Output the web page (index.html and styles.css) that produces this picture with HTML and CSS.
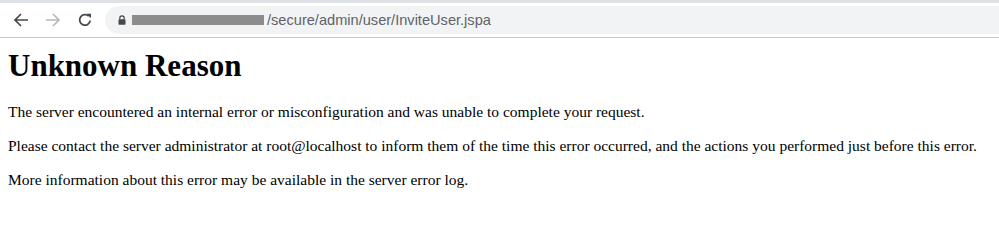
FILE: index.html
```html
<!DOCTYPE html>
<html>
<head>
<meta charset="utf-8">
<link rel="stylesheet" href="styles.css">
</head>
<body>
<div class="chrome">
  <div class="tabstrip"></div>
  <div class="toolbar">
    <div class="navs">
      <svg class="nav" width="16" height="16" viewBox="0 0 16 16"><path d="M15 8H2.5M8 2L2 8l6 6" fill="none" stroke="#45484c" stroke-width="1.7"/></svg>
      <svg class="nav" width="16" height="16" viewBox="0 0 16 16"><path d="M1 8h12.5M8 2l6 6-6 6" fill="none" stroke="#b4b7bb" stroke-width="1.6"/></svg>
      <svg class="nav" width="16" height="16" viewBox="0 0 16 16"><path d="M13.2 8.6A5.3 5.3 0 1 1 11.8 4.2" fill="none" stroke="#45484c" stroke-width="1.8"/><path d="M9.6 1.8h4.4v4.4z" fill="#45484c"/></svg>
    </div>
    <div class="omnibox">
      <svg class="lock" width="8" height="10" viewBox="0 0 8 10"><path d="M1.8 4.5V3a2.2 2.2 0 0 1 4.4 0v1.5" fill="none" stroke="#45484c" stroke-width="1.2"/><rect x="0.5" y="4.3" width="7" height="5.4" rx="0.8" fill="#45484c"/></svg>
      <span class="redact"></span>
      <span class="url">/secure/admin/user/InviteUser.jspa</span>
    </div>
  </div>
</div>
<div class="page">
  <h1>Unknown Reason</h1>
  <p>The server encountered an internal error or misconfiguration and was unable to complete your request.</p>
  <p>Please contact the server administrator at root@localhost to inform them of the time this error occurred, and the actions you performed just before this error.</p>
  <p>More information about this error may be available in the server error log.</p>
</div>
</body>
</html>
```
FILE: styles.css
```css
html, body {
  margin: 0;
  padding: 0;
  background: #fff;
}
.chrome {
  font-family: "Liberation Sans", Arial, sans-serif;
}
.tabstrip {
  height: 3px;
  background: #dee1e6;
}
.toolbar {
  height: 35px;
  display: flex;
  align-items: center;
  border-bottom: 1px solid #c8c9cb;
  box-sizing: border-box;
  padding-left: 13px;
}
.navs {
  display: flex;
  align-items: center;
  gap: 16px;
}
.nav {
  display: block;
}
.omnibox {
  margin-left: 12px;
  flex: 1;
  height: 28px;
  margin-right: -20px;
  background: #f1f3f4;
  border-radius: 14px;
  display: flex;
  align-items: center;
  padding-left: 13px;
}
.lock {
  display: block;
  margin-top: -1px;
}
.redact {
  display: block;
  width: 132px;
  height: 10px;
  margin-left: 6px;
  background: #8c8c8c;
  filter: blur(0.6px);
}
.url {
  font-size: 14.6px;
  color: #5f6368;
  margin-left: 3px;
}
.page {
  padding: 0 8px;
  font-family: "Liberation Serif", "Times New Roman", serif;
  color: #000;
}
h1 {
  font-size: 31px;
  font-weight: bold;
  margin: 10px 0 19px;
  line-height: 36px;
}
p {
  font-size: 15.5px;
  line-height: 18px;
  margin: 0 0 16px;
}
```
